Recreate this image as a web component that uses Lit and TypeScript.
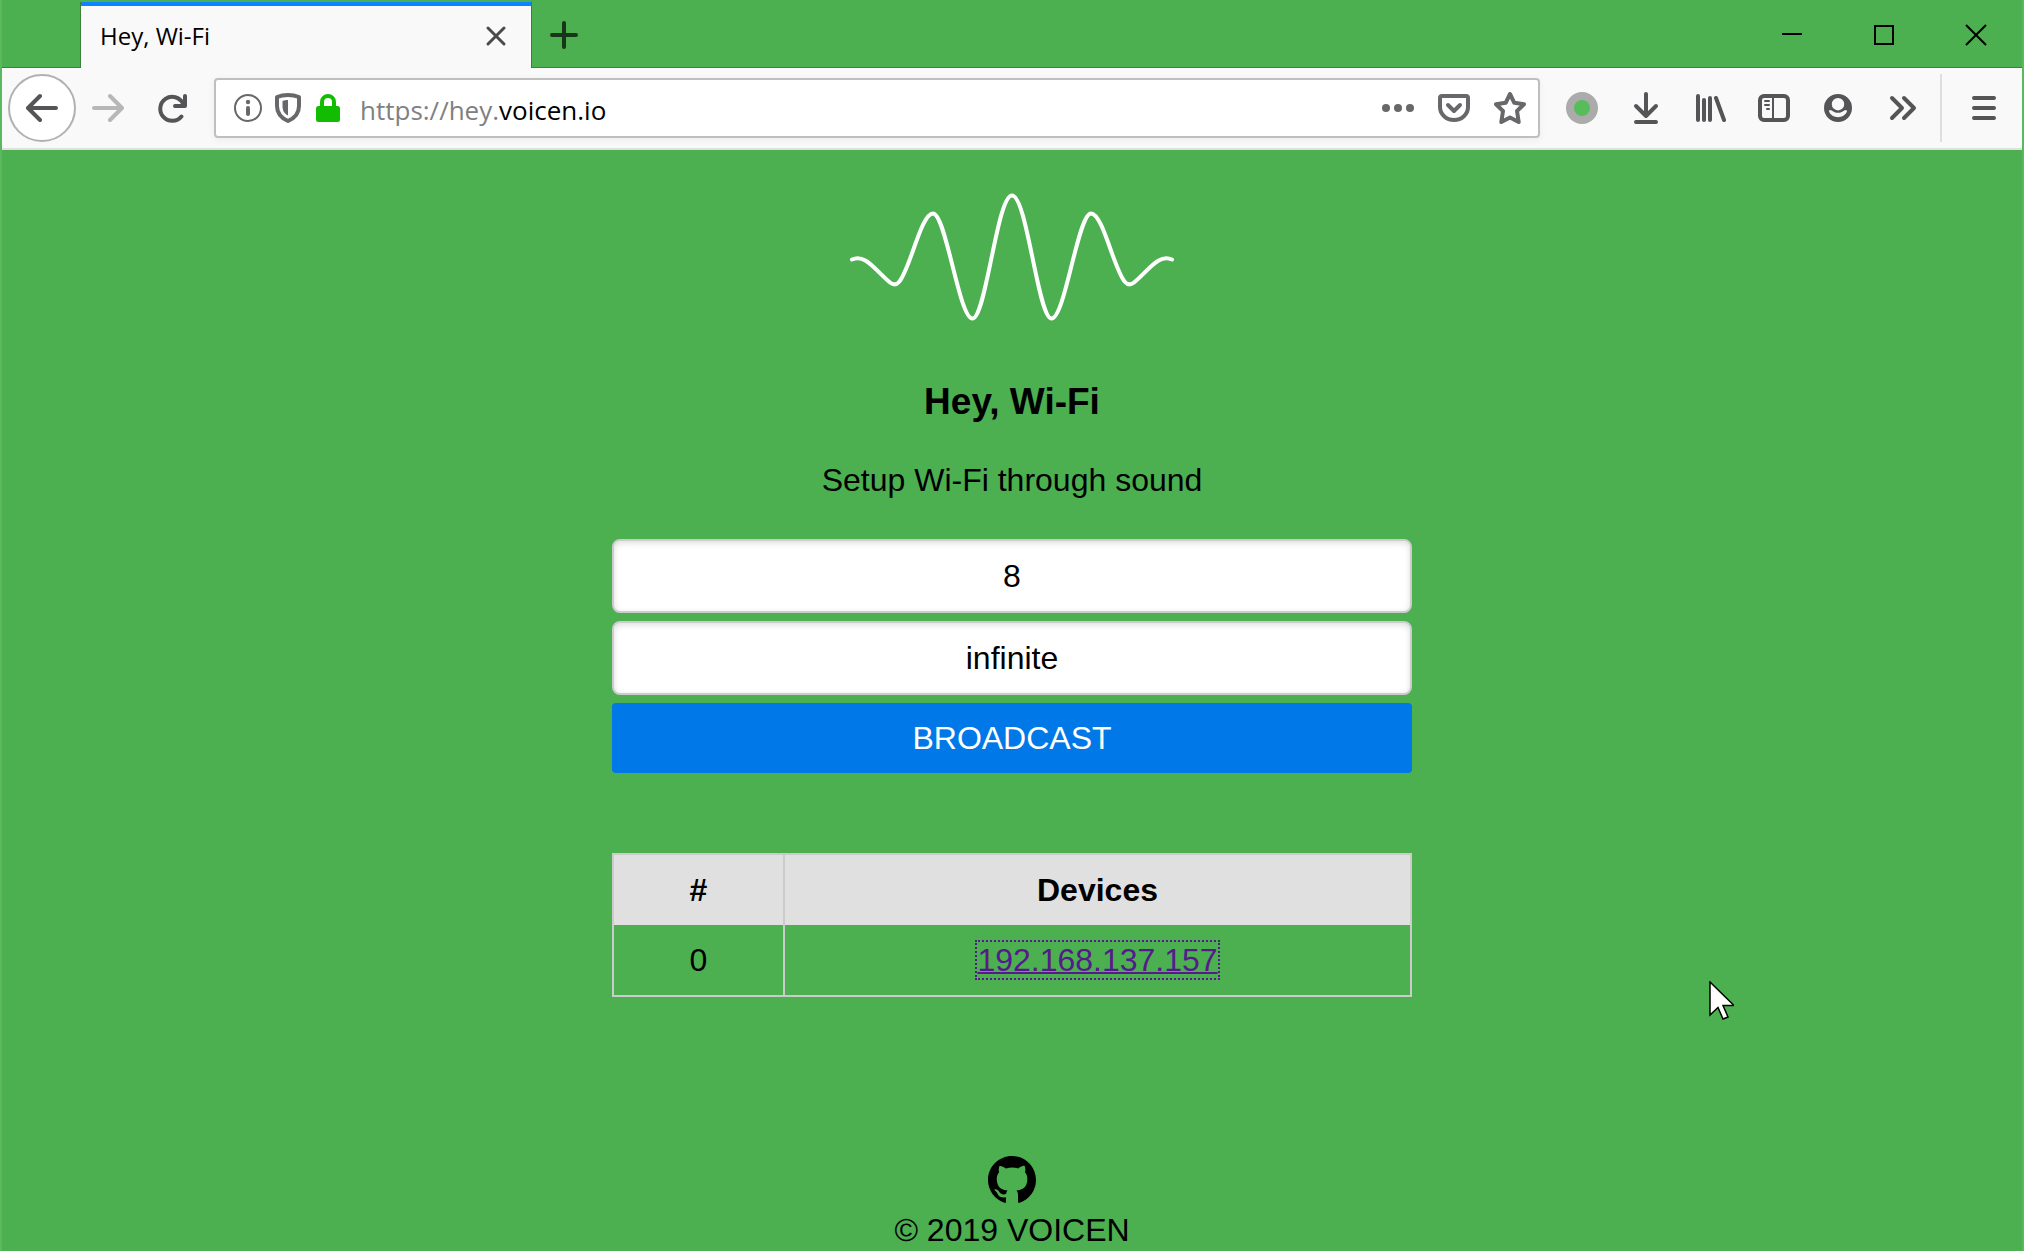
import { LitElement, html, css, svg } from "lit";
import { customElement, state } from "lit/decorators.js";

const icon = (body: unknown, cls = "icon") => html`<svg class=${cls} viewBox="0 0 32 32" fill="none" stroke="currentColor" stroke-width="4" stroke-linecap="round" stroke-linejoin="round" aria-hidden="true">${body}</svg>`;

const icons = {
  back: svg`<path d="M30 16H2M14 4L2 16l12 12"/>`,
  forward: svg`<path d="M2 16h28M18 4l12 12-12 12"/>`,
  reload: svg`<path d="M25.500 24.500A12 12 0 1 1 27 11.500" /><path d="M29 4v10H19"/>`,
  info: svg`<circle cx="16" cy="16" r="13" stroke-width="2"/><path d="M16 16v6" stroke-width="4"/><circle cx="16" cy="10" r="2.200" fill="currentColor" stroke="none"/>`,
  shield: svg`<path d="M16 3c4 0 8 .8 11 2v9c0 8-4 12-11 15C9 26 5 22 5 14V5c3-1.200 7-2 11-2z"/><path d="M16 8v15.500c-4-2-5.500-5-5.500-9.500V9c2-.6 3.500-1 5.500-1z" fill="currentColor" stroke="none"/>`,
  lock: svg`<path d="M10 14V10a6 6 0 0 1 12 0v4"/><rect x="4" y="14" width="24" height="16" rx="2.500" fill="currentColor" stroke="none"/>`,
  dots: svg`<g fill="currentColor" stroke="none"><circle cx="4" cy="16" r="4"/><circle cx="16" cy="16" r="4"/><circle cx="28" cy="16" r="4"/></g>`,
  pocket: svg`<path d="M4 4h24a2 2 0 0 1 2 2v9a14 13 0 0 1-28 0V6a2 2 0 0 1 2-2z"/><path d="M10 13l6 6 6-6"/>`,
  star: svg`<path d="M16 2l4.300 8.800 9.700 1.400-7 6.800 1.700 11L16 25.400 7.300 30 9 19l-7-6.800 9.700-1.400z"/>`,
  download: svg`<path d="M16 2v22M6 14l10 10 10-10M6 30h20"/>`,
  library: svg`<path d="M4 4v24M10 8v20M16 6v22M22 6l8 22"/>`,
  sidebar: svg`<rect x="2" y="4" width="28" height="24" rx="4"/><path d="M15 4v24" stroke-width="2"/><path d="M7 9h4M7 13h4M9 17h2" stroke-width="2"/>`,
  account: svg`<path fill="currentColor" stroke="none" fill-rule="evenodd" d="M16 2a14 14 0 1 1 0 28a14 14 0 0 1 0-28zM16 6a6.200 6.200 0 1 0 0 12.400a6.200 6.200 0 0 0 0-12.400zM8.200 18c2 .2 3.800 2.800 7.800 2.800s5.800-2.600 7.800-2.800c1 0 1.400.9 1 1.800C23.500 23 20 25.200 16 25.200S8.500 23 7.200 19.800c-.4-.9 0-1.800 1-1.800z"/>`,
  more: svg`<path d="M6 6l10 10L6 26M18 6l10 10-10 10"/>`,
  menu: svg`<path d="M6 6h20M6 16h20M6 26h20"/>`,
};

@customElement("app-root")
export class AppRoot extends LitElement {
  @state() private channel = "8";
  @state() private mode = "infinite";
  private devices = ["192.168.137.157"];

  static styles = css`
    :host {
      display: flex;
      flex-direction: column;
      box-sizing: border-box;
      min-height: 100vh;
      position: relative;
      background: #4caf50;
      border: 0 solid #5cb85f;
      border-width: 0 2px;
      color: #000;
      font: 32px/36px "Liberation Sans", Arial, sans-serif;
    }
    * { box-sizing: border-box; }
    button { border: 0; padding: 0; background: none; color: inherit; font: inherit; display: grid; place-items: center; flex: none; }
    svg { display: block; }
    .icon { width: 32px; height: 32px; }
    .tabs { display: flex; height: 68px; padding-top: 2px; border-bottom: 1px solid #388339; }
    .tab {
      display: flex; align-items: center; justify-content: space-between;
      width: 452px; height: 66px; margin-left: 78px; padding: 2px 19px 0 19px;
      background: #f9f9f9; border: solid #388339; border-width: 0 1px; box-shadow: inset 0 4px #0a84ff;
      font: 24px/32px "Open Sans", "Noto Sans", sans-serif;
    }
    .tab-close { color: #4a4a4a; }
    .new-tab { width: 64px; color: #173518; }
    .window { display: flex; margin-left: auto; }
    .window button { width: 92px; }
    .bar { display: flex; align-items: center; height: 82px; padding: 0 6px; background: #f9f9f9; border-bottom: 2px solid #e0e0e0; color: #555557; }
    .back { width: 68px; height: 68px; border: 2px solid #b1b1b1; border-radius: 50%; background: #fff; }
    .nav { width: 64px; height: 64px; }
    .faded { color: #b7b7b8; }
    .address {
      display: flex; align-items: center; flex: 1; min-width: 0; height: 60px; margin: 0 10px; padding: 0 0 0 12px;
      border: 2px solid #bfbfbf; border-radius: 4px; background: #fff; box-shadow: 0 2px 8px #0000000d; color: #68686a;
    }
    .mini { width: 40px; height: 40px; }
    .secure { color: #12bc00; }
    .url { flex: 1; padding: 4px 0 0 12px; color: #000; text-decoration: none; font: 26px/36px "Open Sans", "Noto Sans", sans-serif; }
    .muted { color: #808080; }
    .action { width: 56px; height: 56px; }
    .divider { width: 2px; height: 68px; margin: 0 10px 0 6px; background: #dedede; }
    main { display: flex; flex-direction: column; align-items: center; flex: 1; padding-top: 42px; text-align: center; }
    .wave { width: 328px; height: 132px; }
    h1 { margin: 56px 0 0; font-size: 37px; line-height: 44px; }
    .lead { margin: 38px 0 0; }
    form { display: flex; flex-direction: column; gap: 8px; width: 800px; max-width: 100%; margin-top: 41px; }
    input {
      width: 100%; height: 74px; padding: 0 24px; border: 2px solid #ccc; border-radius: 8px; background: #fff;
      box-shadow: inset 0 2px 6px #ddd; color: #000; font: inherit; text-align: center;
    }
    .broadcast { height: 70px; border-radius: 4px; background: #0078e7; color: #fff; }
    table { width: 800px; max-width: 100%; margin-top: 80px; border: 2px solid #cbcbcb; border-collapse: separate; border-spacing: 0; table-layout: fixed; }
    th, td { height: 70px; padding: 0; }
    th { background: #e0e0e0; }
    .index { width: 169px; }
    .device { border-left: 2px solid #cbcbcb; }
    .device a { color: #551a8b; outline: 2px dotted #551a8b; text-decoration-thickness: 2px; }
    footer { display: flex; flex-direction: column; align-items: center; gap: 8px; padding-bottom: 3px; }
    .github { width: 48px; height: 48px; color: #000; }
    .pointer { position: absolute; left: 1706px; top: 981px; width: 26px; height: 40px; pointer-events: none; }
  `;

  render() {
    return html`
      <header>
        <div class="tabs">
          <div class="tab">
            <span>Hey, Wi-Fi</span>
            <button class="tab-close" aria-label="Close tab">${icon(svg`<path d="M8 8l16 16M24 8L8 24" stroke-width="3"/>`)}</button>
          </div>
          <button class="new-tab" aria-label="New tab">${icon(svg`<path d="M16 4v24M4 16h24"/>`)}</button>
          <div class="window">
            <button aria-label="Minimize">${icon(svg`<path d="M6 15h20" stroke-width="2" stroke-linecap="butt"/>`)}</button>
            <button aria-label="Maximize">${icon(svg`<path d="M7 7h18v18H7z" stroke-width="2" stroke-linejoin="miter"/>`)}</button>
            <button aria-label="Close window">${icon(svg`<path d="M6 6l20 20M26 6L6 26" stroke-width="2" stroke-linecap="butt"/>`)}</button>
          </div>
        </div>
        <nav class="bar" aria-label="Browser toolbar">
          <button class="back" aria-label="Back">${icon(icons.back)}</button>
          <button class="nav faded" aria-label="Forward">${icon(icons.forward)}</button>
          <button class="nav" aria-label="Reload">${icon(icons.reload)}</button>
          <div class="address">
            <button class="mini" aria-label="Site information">${icon(icons.info)}</button>
            <button class="mini" aria-label="Tracking protection">${icon(icons.shield)}</button>
            <button class="mini secure" aria-label="Secure connection">${icon(icons.lock)}</button>
            <a class="url" href="https://hey.voicen.io"><span class="muted">https://hey.</span>voicen.io</a>
            <button class="action" aria-label="Page actions">${icon(icons.dots)}</button>
            <button class="action" aria-label="Save to Pocket">${icon(icons.pocket)}</button>
            <button class="action" aria-label="Bookmark">${icon(icons.star)}</button>
          </div>
          <button class="nav" aria-label="Extension">${icon(svg`<circle cx="16" cy="16" r="16" fill="#ababab" stroke="none"/><circle cx="16" cy="16" r="8" fill="#57bd5a" stroke="none"/>`)}</button>
          <button class="nav" aria-label="Downloads">${icon(icons.download)}</button>
          <button class="nav" aria-label="Library">${icon(icons.library)}</button>
          <button class="nav" aria-label="Sidebar">${icon(icons.sidebar)}</button>
          <button class="nav" aria-label="Account">${icon(icons.account)}</button>
          <button class="nav" aria-label="More tools">${icon(icons.more)}</button>
          <span class="divider"></span>
          <button class="nav" aria-label="Menu">${icon(icons.menu)}</button>
        </nav>
      </header>
      <main>
        <svg class="wave" viewBox="0 0 328 132" fill="none" stroke="#fff" stroke-width="4" stroke-linecap="round" aria-hidden="true">
          <path d="M4 67.500C17 61 28 79 42 90.500Q47 94.500 51 90C62 78 73 21.500 85 21.500C98 21.500 111 126.500 124.500 126.500C138 126.500 149 3.500 164 3.500C179 3.500 190 126.500 203.500 126.500C217 126.500 230 21.500 243 21.500C255 21.500 266 78 277 90Q281 94.500 286 90.500C300 79 311 61 324 67.500"/>
        </svg>
        <h1>Hey, Wi-Fi</h1>
        <p class="lead">Setup Wi-Fi through sound</p>
        <form @submit=${(e: Event) => e.preventDefault()}>
          <input aria-label="Network name" .value=${this.channel} @input=${(e: Event) => (this.channel = (e.target as HTMLInputElement).value)} />
          <input aria-label="Password" .value=${this.mode} @input=${(e: Event) => (this.mode = (e.target as HTMLInputElement).value)} />
          <button class="broadcast">BROADCAST</button>
        </form>
        <table>
          <thead><tr><th class="index" scope="col">#</th><th class="device" scope="col">Devices</th></tr></thead>
          <tbody>${this.devices.map((ip, i) => html`<tr><td>${i}</td><td class="device"><a href="http://${ip}">${ip}</a></td></tr>`)}</tbody>
        </table>
      </main>
      <footer>
        <a class="github" href="https://github.com" aria-label="GitHub"><svg viewBox="0 0 16 16" fill="currentColor"><path d="M8 0C3.580 0 0 3.580 0 8c0 3.540 2.290 6.530 5.470 7.590.4.070.55-.17.55-.38 0-.19-.01-.82-.01-1.490-2.010.37-2.530-.49-2.690-.94-.09-.23-.48-.94-.82-1.130-.28-.15-.68-.52-.01-.53.63-.01 1.080.58 1.230.82.72 1.210 1.870.87 2.330.66.07-.52.28-.87.51-1.070-1.780-.2-3.640-.89-3.640-3.950 0-.87.31-1.590.82-2.150-.08-.2-.36-1.020.08-2.120 0 0 .67-.21 2.200.82.64-.18 1.320-.27 2-.27s1.360.09 2 .27c1.530-1.040 2.200-.82 2.200-.82.44 1.100.16 1.920.08 2.120.51.56.82 1.270.82 2.150 0 3.070-1.870 3.750-3.650 3.950.29.25.54.73.54 1.480 0 1.070-.01 1.930-.01 2.200 0 .21.15.46.55.38A8.010 8.010 0 0 0 16 8c0-4.420-3.580-8-8-8z"/></svg></a>
        <span>© 2019 VOICEN</span>
      </footer>
      <svg class="pointer" viewBox="0 0 26 40" aria-hidden="true"><path d="M2 1v33l8-7.500 5 11.500 5-2-5-11.500h11z" fill="#fff" stroke="#000" stroke-width="1.500"/></svg>
    `;
  }
}
